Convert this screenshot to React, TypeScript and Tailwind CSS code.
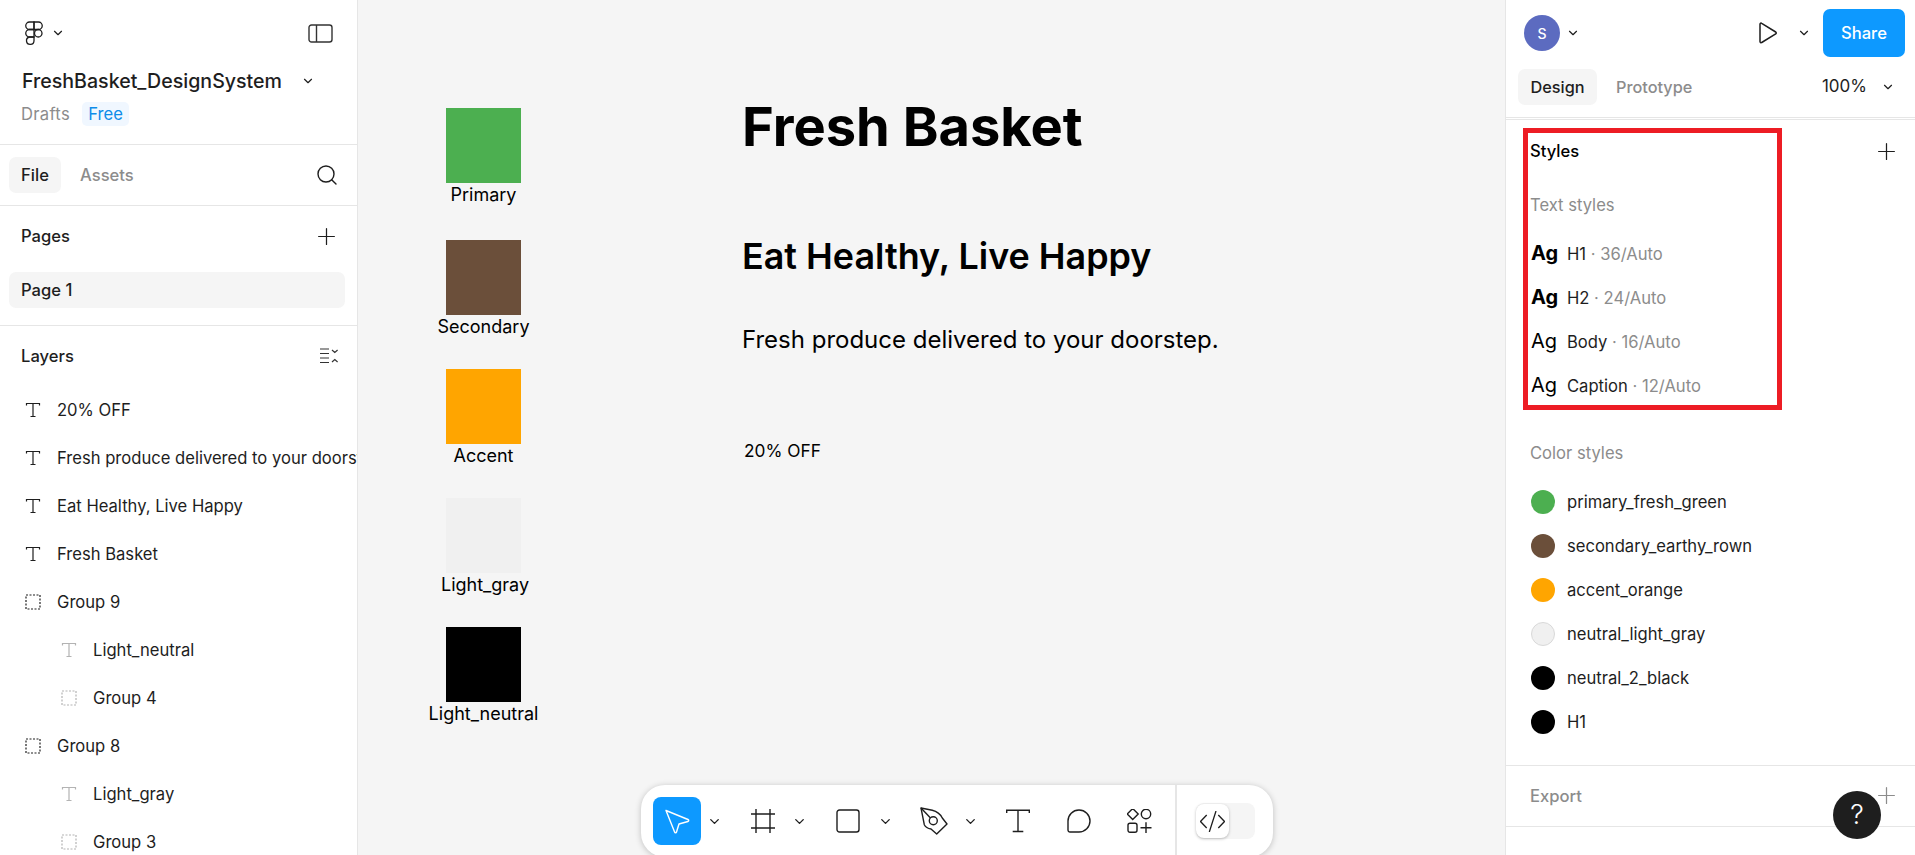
import { ChevronDown, Plus, Search } from 'lucide-react';

function FigmaLogo() {
  return (
    <svg width="24" height="26" viewBox="0 0 24 26" fill="none" stroke="#1e1e1e" strokeWidth="1.3">
      <path d="M12 2H7.500a3.750 3.750 0 0 0 0 7.500H12V2Z" />
      <path d="M12 2h4.500a3.750 3.750 0 0 1 0 7.500H12V2Z" />
      <path d="M12 9.500H7.500a3.750 3.750 0 0 0 0 7.500H12V9.500Z" />
      <circle cx="16.250" cy="13.250" r="3.750" />
      <path d="M7.500 17H12v3.750a3.750 3.750 0 1 1-4.500-3.750Z" />
    </svg>
  );
}

function PanelIcon() {
  return (
    <svg width="25" height="19" viewBox="0 0 25 19" fill="none" stroke="#333" strokeWidth="1.4">
      <rect x="1" y="1" width="23" height="17" rx="2.500" />
      <path d="M8.500 1v17" />
    </svg>
  );
}

function TextIcon({ faded = false }: { faded?: boolean }) {
  return (
    <svg width="16" height="16" viewBox="0 0 16 16" fill="none" stroke={faded ? '#b3b3b3' : '#1e1e1e'} strokeWidth="1.2" className="shrink-0">
      <path d="M1.500 3.500V1.500h13v2M8 1.500v13M5.500 14.500h5" />
    </svg>
  );
}

function GroupIcon({ faded = false }: { faded?: boolean }) {
  return (
    <svg width="16" height="16" viewBox="0 0 16 16" fill="none" stroke={faded ? '#b3b3b3' : '#1e1e1e'} strokeWidth="1.2" strokeDasharray="2 1.500" className="shrink-0">
      <rect x="1" y="1" width="14" height="14" />
    </svg>
  );
}

function CollapseIcon() {
  return (
    <svg width="20" height="18" viewBox="0 0 20 18" fill="none" stroke="#333" strokeWidth="1.2">
      <path d="M1 2h9M1 6.500h9M1 11h9M1 15.500h9M13 3l2.800 2.500L18.600 3M13 15l2.800-2.500 2.800 2.500" />
    </svg>
  );
}

function PlayIcon() {
  return (
    <svg width="22" height="24" viewBox="0 0 22 24" fill="none" stroke="#1e1e1e" strokeWidth="1.5" strokeLinejoin="round">
      <path d="M3 3.200c0-.9 1-1.400 1.700-.9l14 8.700c.7.400.7 1.400 0 1.800l-14 8.700c-.7.500-1.700 0-1.700-.9V3.200Z" />
    </svg>
  );
}

function CursorIcon() {
  return (
    <svg width="26" height="26" viewBox="0 0 26 26" fill="none" stroke="#fff" strokeWidth="1.4" strokeLinejoin="round">
      <path d="M2 2.500 24 11.500c1 .5 1 1.700-.1 2L15 16l-2.500 8c-.3 1-1.600 1-1.900 0L2 2.500Z" />
    </svg>
  );
}

function FrameIcon() {
  return (
    <svg width="24" height="24" viewBox="0 0 24 24" fill="none" stroke="#1e1e1e" strokeWidth="1.4">
      <path d="M5 0v24M19 0v24M0 5h24M0 19h24" />
    </svg>
  );
}

function RectIcon() {
  return (
    <svg width="24" height="24" viewBox="0 0 24 24" fill="none" stroke="#1e1e1e" strokeWidth="1.4">
      <rect x="1" y="1" width="22" height="22" rx="2.500" />
    </svg>
  );
}

function PenIcon() {
  return (
    <svg width="28" height="28" viewBox="0 0 28 28" fill="none" stroke="#1e1e1e" strokeWidth="1.4" strokeLinejoin="round">
      <path d="M1 1 12.300 3.300C17 4.500 20.500 7.500 22.300 11L27 17 16.700 27 11 22C8 21.500 5.500 20 4.300 17.700L1 1Z" />
      <path d="M1 1 10.500 11" />
      <circle cx="13.300" cy="13.700" r="4" />
    </svg>
  );
}

function BigTextIcon() {
  return (
    <svg width="24" height="24" viewBox="0 0 24 24" fill="none" stroke="#1e1e1e" strokeWidth="1.4">
      <path d="M.7 4V1.200H23.300V4M12 1.200V22.500M6.700 22.500H17.300" />
    </svg>
  );
}

function CommentIcon() {
  return (
    <svg width="24" height="24" viewBox="0 0 24 24" fill="none" stroke="#1e1e1e" strokeWidth="1.4">
      <path d="M1 12a11 11 0 1 1 11 11H3a2 2 0 0 1-2-2V12Z" />
    </svg>
  );
}

function ComponentsIcon() {
  return (
    <svg width="25" height="24" viewBox="0 0 25 24" fill="none" stroke="#1e1e1e" strokeWidth="1.4">
      <path d="M5.700 -.5 11.200 5 5.700 10.500 .2 5 5.700 -.5Z" />
      <circle cx="19" cy="5" r="4.700" />
      <rect x="1" y="14.300" width="9" height="9" rx="2" />
      <path d="M19 13.200v11M13.500 18.700h11" />
    </svg>
  );
}

function CodeIcon() {
  return (
    <svg width="25" height="21" viewBox="0 0 25 21" fill="none" stroke="#1e1e1e" strokeWidth="1.300">
      <path d="M6.700 4 .5 10.500 6.700 17M18.300 4l6.200 6.500-6.200 6.500M16 0 9.300 21" />
    </svg>
  );
}

const layers = [
  { name: '20% OFF', kind: 'text', nested: false },
  { name: 'Fresh produce delivered to your doorstep.', kind: 'text', nested: false },
  { name: 'Eat Healthy, Live Happy', kind: 'text', nested: false },
  { name: 'Fresh Basket', kind: 'text', nested: false },
  { name: 'Group 9', kind: 'group', nested: false },
  { name: 'Light_neutral', kind: 'text', nested: true },
  { name: 'Group 4', kind: 'group', nested: true },
  { name: 'Group 8', kind: 'group', nested: false },
  { name: 'Light_gray', kind: 'text', nested: true },
  { name: 'Group 3', kind: 'group', nested: true },
];

const swatches = [
  { label: 'Primary', box: 'bg-[#4caf50]', pos: 'top-[108px]', shift: '' },
  { label: 'Secondary', box: 'bg-[#6b4f3a]', pos: 'top-[240px]', shift: '' },
  { label: 'Accent', box: 'bg-[#ffa500]', pos: 'top-[369px]', shift: '' },
  { label: 'Light_gray', box: 'bg-[#f0f0f0]', pos: 'top-[498px]', shift: 'ml-[3px]' },
  { label: 'Light_neutral', box: 'bg-black', pos: 'top-[627px]', shift: '' },
];

const textStyles = [
  { name: 'H1', spec: '36/Auto', bold: true },
  { name: 'H2', spec: '24/Auto', bold: true },
  { name: 'Body', spec: '16/Auto', bold: false },
  { name: 'Caption', spec: '12/Auto', bold: false },
];

const colorStyles = [
  { name: 'primary_fresh_green', dot: 'bg-[#4caf50]' },
  { name: 'secondary_earthy_rown', dot: 'bg-[#6b4f3a]' },
  { name: 'accent_orange', dot: 'bg-[#ffa500]' },
  { name: 'neutral_light_gray', dot: 'bg-[#f0f0f0] border border-[#d9d9d9]' },
  { name: 'neutral_2_black', dot: 'bg-black' },
  { name: 'H1', dot: 'bg-black' },
];

export default function App() {
  return (
    <div className="relative flex h-[855px] w-[1915px] overflow-hidden bg-white font-[Inter,sans-serif] text-[16.6px] text-[#1e1e1e]">
      {/* Left panel */}
      <aside className="flex w-[358px] shrink-0 flex-col overflow-hidden border-r border-[#e6e6e6]">
        <div className="h-[145px] shrink-0 border-b border-[#e6e6e6]">
          <div className="flex h-[66px] items-center justify-between pl-[22px] pr-[24px]">
            <div className="flex items-center gap-[5px]">
              <FigmaLogo />
              <ChevronDown size={14} strokeWidth={2} />
            </div>
            <PanelIcon />
          </div>
          <div className="flex h-[30px] items-center justify-between pl-[22px] pr-[42px]">
            <span className="pt-[1px] text-[19.6px] font-medium">FreshBasket_DesignSystem</span>
            <ChevronDown size={14} strokeWidth={2} />
          </div>
          <div className="mt-[6px] flex h-[24px] items-center gap-[12px] pl-[21px]">
            <span className="w-[49px] tracking-[0.3px] text-[#8c8c8c]">Drafts</span>
            <span className="w-[47px] rounded-[5px] bg-[#f0f7ff] text-center leading-[24px] text-[#0d8ce9]">Free</span>
          </div>
        </div>

        <div className="flex h-[61px] shrink-0 items-center justify-between border-b border-[#e6e6e6] pl-[9px] pr-[18px]">
          <div className="flex items-center gap-[7px]">
            <span className="flex h-[36px] w-[52px] items-center justify-center rounded-[7px] bg-[#f5f5f5] font-medium">File</span>
            <span className="px-[12px] font-medium text-[#8c8c8c]">Assets</span>
          </div>
          <Search size={24} strokeWidth={1.4} />
        </div>

        <div className="h-[120px] shrink-0 border-b border-[#e6e6e6]">
          <div className="flex h-[60px] items-center justify-between pl-[21px] pr-[17px]">
            <span className="font-medium">Pages</span>
            <Plus size={27} strokeWidth={1.1} />
          </div>
          <div className="mx-[9px] mt-[6px] flex h-[36px] w-[336px] items-center rounded-[7px] bg-[#f5f5f5] pl-[12px] font-medium">Page 1</div>
        </div>

        <div className="flex h-[60px] shrink-0 items-center justify-between pl-[21px] pr-[18px]">
          <span className="font-medium">Layers</span>
          <CollapseIcon />
        </div>
        <div className="flex flex-col">
          {layers.map((layer) => (
            <div key={layer.name + layer.kind} className={`flex h-[48px] shrink-0 items-center gap-[16px] whitespace-nowrap ${layer.nested ? 'pl-[61px]' : 'pl-[25px]'}`}>
              {layer.kind === 'text' ? <TextIcon faded={layer.nested} /> : <GroupIcon faded={layer.nested} />}
              <span>{layer.name}</span>
            </div>
          ))}
        </div>
      </aside>

      {/* Canvas */}
      <main className="relative flex-1 bg-[#f5f5f5] text-black">
        {swatches.map((s) => (
          <div key={s.label} className={`absolute left-[88px] flex w-[75px] flex-col items-center ${s.pos}`}>
            <div className={`h-[75px] w-[75px] shrink-0 ${s.box}`} />
            <span className={`mt-[1px] whitespace-nowrap text-[18px] leading-[22px] ${s.shift}`}>{s.label}</span>
          </div>
        ))}
        <h1 className="absolute left-[384px] top-[93px] text-[54.2px] font-bold leading-[66px]">Fresh Basket</h1>
        <h2 className="absolute left-[384px] top-[234px] text-[35.9px] font-semibold leading-[44px]">Eat Healthy, Live Happy</h2>
        <p className="absolute left-[384px] top-[325px] text-[24px] leading-[30px]">Fresh produce delivered to your doorstep.</p>
        <p className="absolute left-[386px] top-[440px] text-[17.3px] font-normal leading-[22px]">20% OFF</p>
      </main>

      {/* Right panel */}
      <aside className="flex w-[410px] shrink-0 flex-col overflow-hidden border-l border-[#e6e6e6]">
        <div className="flex h-[66px] shrink-0 items-center pl-[18px] pr-[10px]">
          <span className="flex h-[36px] w-[36px] items-center justify-center rounded-full bg-[#5c6bc0] text-[14px] font-medium text-white">S</span>
          <ChevronDown size={14} strokeWidth={2} className="ml-[6px]" />
          <span className="ml-auto"><PlayIcon /></span>
          <ChevronDown size={14} strokeWidth={2} className="ml-[18px]" />
          <span className="ml-[12px] flex h-[48px] w-[82px] items-center justify-center rounded-[7px] bg-[#0d99ff] text-[16.6px] font-medium text-white">Share</span>
        </div>
        <div className="flex h-[54px] shrink-0 items-start border-b-[3px] border-double border-[#e6e6e6] pl-[12px] pr-[20px]">
          <div className="mt-[3px] flex items-center gap-[7px]">
            <span className="flex h-[36px] w-[79px] items-center justify-center rounded-[7px] bg-[#f5f5f5] text-[16.3px] font-medium">Design</span>
            <span className="px-[12px] text-[16.3px] font-medium text-[#8c8c8c]">Prototype</span>
          </div>
          <span className="ml-auto mt-[3px] flex h-[36px] items-center gap-[14px] text-[17px]">
            100%
            <ChevronDown size={14} strokeWidth={2} />
          </span>
        </div>

        <div className="flex flex-col">
          <div className="flex h-[63px] shrink-0 items-center justify-between pl-[24px] pr-[15px]">
            <span className="-mt-[1px] font-medium text-black">Styles</span>
            <Plus size={27} strokeWidth={1.1} />
          </div>
          <div className="flex h-[44px] shrink-0 items-center pl-[24px] text-[#8c8c8c]">Text styles</div>
          <div className="mt-[5px] flex flex-col">
            {textStyles.map((t) => (
              <div key={t.name} className="flex h-[44px] shrink-0 items-center gap-[12px] pl-[25px]">
                <span className={`-mt-[2px] w-[24px] text-[20px] leading-none text-black ${t.bold ? 'font-bold' : 'font-normal'}`}>Ag</span>
                <span>
                  {t.name}
                  <span className="text-[#8c8c8c]"> · {t.spec}</span>
                </span>
              </div>
            ))}
          </div>
          <div className="mt-[23px] flex h-[44px] shrink-0 items-center pl-[24px] text-[#8c8c8c]">Color styles</div>
          <div className="mt-[5px] flex flex-col">
            {colorStyles.map((c) => (
              <div key={c.name} className="flex h-[44px] shrink-0 items-center gap-[12px] pl-[25px]">
                <span className={`h-[24px] w-[24px] rounded-full ${c.dot}`} />
                <span>{c.name}</span>
              </div>
            ))}
          </div>
          <div className="mt-[21px] flex h-[62px] shrink-0 items-center justify-between border-y border-[#e6e6e6] pl-[24px] pr-[15px]">
            <span className="font-medium text-[#8c8c8c]">Export</span>
            <Plus size={27} strokeWidth={1.1} className="-mt-[2px] text-[#8c8c8c]" />
          </div>
        </div>
      </aside>

      {/* Annotation box drawn over the styles list */}
      <div className="absolute left-[1523px] top-[128px] h-[282px] w-[259px] border-[5px] border-[#ed1c24]" />

      {/* Help button */}
      <div className="absolute left-[1833px] top-[791px] flex h-[48px] w-[48px] items-center justify-center rounded-full bg-[#1e1e1e] text-[27px] font-light text-white">?</div>

      {/* Toolbar */}
      <div className="absolute left-[641px] top-[785px] flex h-[72px] w-[632px] items-center rounded-[24px] bg-white pl-[12px] shadow-[0_1px_6px_rgba(0,0,0,0.22)]">
        <span className="flex h-[48px] w-[48px] items-center justify-center rounded-[8px] bg-[#0d99ff]"><CursorIcon /></span>
        <ChevronDown size={15} strokeWidth={2.2} className="ml-[5.5px]" />
        <span className="ml-[21.5px] flex w-[40px] justify-center"><FrameIcon /></span>
        <ChevronDown size={15} strokeWidth={2.2} className="ml-[8.5px]" />
        <span className="ml-[21.5px] flex w-[40px] justify-center"><RectIcon /></span>
        <ChevronDown size={15} strokeWidth={2.2} className="ml-[9.5px]" />
        <span className="ml-[21.5px] flex w-[40px] justify-center"><PenIcon /></span>
        <ChevronDown size={15} strokeWidth={2.2} className="ml-[8.5px]" />
        <span className="ml-[20.5px] flex w-[40px] justify-center"><BigTextIcon /></span>
        <span className="ml-[21px] flex w-[40px] justify-center"><CommentIcon /></span>
        <span className="ml-[20px] flex w-[40px] justify-center"><ComponentsIcon /></span>
        <div className="ml-[16px] flex h-full items-center border-l-[2px] border-[#e6e6e6] pl-[19px]">
          <div className="flex h-[36px] w-[59px] items-center rounded-[8px] bg-[#f5f5f5]">
            <span className="flex h-[34px] w-[33px] items-center justify-center rounded-[8px] bg-white shadow-[0_1px_3px_rgba(0,0,0,0.25)]"><CodeIcon /></span>
          </div>
        </div>
      </div>
    </div>
  );
}
